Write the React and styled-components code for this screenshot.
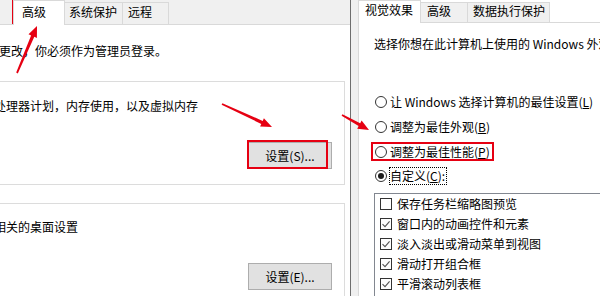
import React from 'react';
import styled, { createGlobalStyle } from 'styled-components';

const GlobalStyle = createGlobalStyle`
  html, body {
    margin: 0;
    padding: 0;
    background: #fff;
  }
  body {
    font-family: "Noto Sans CJK SC", "Noto Sans", sans-serif;
    font-size: 12px;
    color: #000;
  }
`;

const RED = '#e60012';

const Page = styled.div`
  position: relative;
  display: flex;
  width: 600px;
  height: 296px;
  overflow: hidden;
  background: #fff;
`;

const LeftWindow = styled.div`
  flex: none;
  width: 350px;
  display: flex;
  flex-direction: column;
  background: #fff;
`;

const TabStrip = styled.div`
  flex: none;
  display: flex;
  align-items: flex-end;
  height: ${(p) => p.h}px;
  padding-left: ${(p) => p.pl || 0}px;
  background: ${(p) => p.bg};
  border-bottom: 1px solid #d9d9d9;
`;

const Tab = styled.div`
  box-sizing: border-box;
  flex: none;
  width: ${(p) => p.w}px;
  height: ${(p) => (p.active ? p.h + 1 : p.h - 2)}px;
  margin-bottom: ${(p) => (p.active ? -1 : 0)}px;
  margin-left: ${(p) => (p.first ? 0 : -1)}px;
  padding-left: ${(p) => p.pl}px;
  padding-top: ${(p) => p.pt}px;
  line-height: 16px;
  white-space: nowrap;
  border: 1px solid #d9d9d9;
  border-bottom: none;
  background: ${(p) => (p.active ? '#fff' : '#f0f0f0')};
  z-index: ${(p) => (p.active ? 1 : 0)};
`;

const LeftBody = styled.div`
  flex: 1;
  display: flex;
  flex-direction: column;
`;

const Note = styled.div`
  margin-top: 18px;
  margin-left: -1px;
  line-height: 16px;
  white-space: nowrap;
`;

const Group = styled.div`
  box-sizing: border-box;
  flex: none;
  width: 365px;
  margin-left: -20px;
  margin-top: ${(p) => p.mt}px;
  padding: ${(p) => p.pt}px 12px 15px 13px;
  display: flex;
  flex-direction: column;
  border: 1px solid #dcdcdc;
`;

const GroupText = styled.div`
  line-height: 16px;
  white-space: nowrap;
`;

const Button = styled.div`
  box-sizing: border-box;
  align-self: flex-end;
  width: 84px;
  height: 27px;
  margin-top: 28px;
  display: flex;
  align-items: center;
  justify-content: center;
  background: #e1e1e1;
  border: 1px solid #adadad;
  line-height: 16px;
`;

const Divider = styled.div`
  flex: none;
  width: 1px;
  background: #6e6e6e;
`;

const Frame = styled.div`
  flex: none;
  width: 7px;
  background: #f0f0f0;
`;

const RightWindow = styled.div`
  flex: 1;
  display: flex;
  flex-direction: column;
  min-width: 0;
`;

const Panel = styled.div`
  flex: 1;
  display: flex;
  flex-direction: column;
  min-height: 0;
  border-left: 1px solid #d9d9d9;
  background: #fff;
  overflow: hidden;
`;

const Heading = styled.div`
  margin: 13px 0 0 15px;
  line-height: 16px;
  white-space: nowrap;
`;

const Options = styled.div`
  display: flex;
  flex-direction: column;
  gap: 4.8px;
  margin-top: 40px;
  padding-left: 16px;
`;

const Option = styled.div`
  display: flex;
  align-items: center;
  height: 20px;
  white-space: nowrap;
`;

const Radio = styled.span`
  box-sizing: border-box;
  flex: none;
  width: 12px;
  height: 12px;
  border: 1px solid #333;
  border-radius: 50%;
  background: #fff;
  display: flex;
  align-items: center;
  justify-content: center;

  &::after {
    content: '';
    display: ${(p) => (p.checked ? 'block' : 'none')};
    width: 6px;
    height: 6px;
    border-radius: 50%;
    background: #1a1a1a;
  }
`;

const OptionLabel = styled.span`
  margin-left: 2px;
  padding: 0 1px 0 0;
  line-height: 16px;
  border: 1px ${(p) => (p.focused ? 'dotted #000' : 'solid transparent')};
`;

const ListBox = styled.div`
  flex: 1;
  width: 320px;
  margin: 7px 0 0 15px;
  border: 1px solid #828790;
  border-bottom: none;
  display: flex;
  flex-direction: column;
`;

const ListItem = styled.div`
  display: flex;
  align-items: center;
  height: 20px;
  padding-left: 5px;
  white-space: nowrap;
  line-height: 16px;
`;

const CheckBox = styled.span`
  box-sizing: border-box;
  flex: none;
  width: 12px;
  height: 12px;
  margin-right: 5px;
  border: 1px solid #333;
  background: #fff;
  display: flex;
  align-items: center;
  justify-content: center;
`;

const Overlay = styled.svg`
  position: absolute;
  left: 0;
  top: 0;
  width: 600px;
  height: 296px;
  pointer-events: none;
`;

const RedBox = styled.div`
  position: absolute;
  box-sizing: border-box;
  left: ${(p) => p.x}px;
  top: ${(p) => p.y}px;
  width: ${(p) => p.w}px;
  height: ${(p) => p.h}px;
  border: 2px solid ${RED};
  pointer-events: none;
`;

// tapered red annotation arrow, from tail to tip
const arrowPoints = ([tx, ty], [hx, hy]) => {
  const dx = hx - tx;
  const dy = hy - ty;
  const len = Math.hypot(dx, dy);
  const ux = dx / len;
  const uy = dy / len;
  const nx = -uy;
  const ny = ux;
  const headLen = 11;
  const bx = hx - ux * headLen;
  const by = hy - uy * headLen;
  const at = (x, y, k) => [x + nx * k, y + ny * k];
  const pts = [
    at(tx, ty, 0.9),
    at(bx, by, 1.7),
    at(bx, by, 4.6),
    [hx, hy],
    at(bx, by, -4.6),
    at(bx, by, -1.7),
    at(tx, ty, -0.9),
  ];
  return pts.map((p) => p.map((v) => v.toFixed(1)).join(',')).join(' ');
};

const arrows = [
  [[17, 73], [37, 26]],
  [[222, 104], [272, 127]],
  [[342, 115], [369, 130]],
];

const leftTabs = [
  { label: '高级', w: 52, pl: 8, active: true },
  { label: '系统保护', w: 59, pl: 4 },
  { label: '远程', w: 47, pl: 5 },
];

const rightTabs = [
  { label: '视觉效果', w: 63, pl: 6, active: true },
  { label: '高级', w: 48, pl: 6 },
  { label: '数据执行保护', w: 83, pl: 5 },
];

const effects = [
  { label: '保存任务栏缩略图预览', checked: false },
  { label: '窗口内的动画控件和元素', checked: true },
  { label: '淡入淡出或滑动菜单到视图', checked: true },
  { label: '滑动打开组合框', checked: true },
  { label: '平滑滚动列表框', checked: true },
];

const Check = () => (
  <svg width="10" height="10" viewBox="0 0 10 10">
    <path d="M1.5 5.2 L4 7.6 L8.6 2.4" fill="none" stroke="#555" strokeWidth="1.1" />
  </svg>
);

export default function App() {
  return (
    <>
      <GlobalStyle />
      <Page>
        <LeftWindow>
          <TabStrip h={24} pl={13} bg="#f0f0f0">
            {leftTabs.map((t, i) => (
              <Tab key={t.label} first={i === 0} active={t.active} w={t.w} pl={t.pl} h={24} pt={t.active ? 3 : 1}>
                {t.label}
              </Tab>
            ))}
          </TabStrip>
          <LeftBody>
            <Note>更改，你必须作为管理员登录。</Note>
            <Group mt={22} pt={16}>
              <GroupText>处理器计划，内存使用，以及虚拟内存</GroupText>
              <Button>设置(S)...</Button>
            </Group>
            <Group mt={18} pt={15}>
              <GroupText>相关的桌面设置</GroupText>
              <Button>设置(E)...</Button>
            </Group>
          </LeftBody>
        </LeftWindow>
        <Divider />
        <Frame />
        <RightWindow>
          <TabStrip h={22} bg="#fff">
            {rightTabs.map((t, i) => (
              <Tab key={t.label} first={i === 0} active={t.active} w={t.w} pl={t.pl} h={22} pt={t.active ? 1 : 0}>
                {t.label}
              </Tab>
            ))}
          </TabStrip>
          <Panel>
            <Heading>选择你想在此计算机上使用的 Windows 外观和性能设置。</Heading>
            <Options>
              <Option>
                <Radio />
                <OptionLabel>让 Windows 选择计算机的最佳设置(<u>L</u>)</OptionLabel>
              </Option>
              <Option>
                <Radio />
                <OptionLabel>调整为最佳外观(<u>B</u>)</OptionLabel>
              </Option>
              <Option>
                <Radio />
                <OptionLabel>调整为最佳性能(<u>P</u>)</OptionLabel>
              </Option>
              <Option>
                <Radio checked />
                <OptionLabel focused>自定义(<u>C</u>):</OptionLabel>
              </Option>
            </Options>
            <ListBox>
              {effects.map((e) => (
                <ListItem key={e.label}>
                  <CheckBox>{e.checked && <Check />}</CheckBox>
                  {e.label}
                </ListItem>
              ))}
            </ListBox>
          </Panel>
        </RightWindow>

        <RedBox x={12} y={0} w={42} h={24} />
        <RedBox x={247} y={140} w={81} h={29} />
        <RedBox x={371} y={142} w={123} h={19} />
        <Overlay viewBox="0 0 600 296">
          {arrows.map(([from, to], i) => (
            <polygon key={i} points={arrowPoints(from, to)} fill={RED} />
          ))}
        </Overlay>
      </Page>
    </>
  );
}
